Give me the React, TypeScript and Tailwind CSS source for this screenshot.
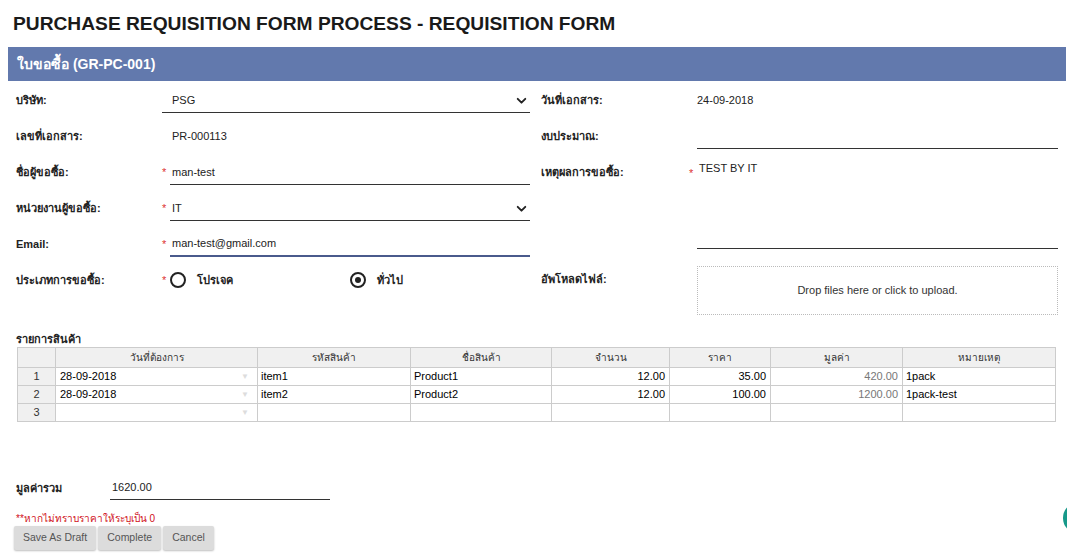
import React from "react";

const font = { fontFamily: '"Liberation Sans", Arial, "Noto Sans", sans-serif' };

function Chevron() {
  return (
    <svg width="13" height="13" viewBox="0 0 24 24" fill="none" stroke="#222" strokeWidth="3.5" strokeLinecap="round" strokeLinejoin="round">
      <path d="M5 9l7 7 7-7" />
    </svg>
  );
}

function Star() {
  return <span className="w-[8px] text-[#d33] text-[11px] leading-none">*</span>;
}

function Row({ label, children, lw = 146 }: { label: string; children?: React.ReactNode; lw?: number }) {
  return (
    <div className="h-[36px] flex items-center">
      <div style={{ width: lw }} className="shrink-0 text-[11px] font-bold text-[#222]">{label}</div>
      <div className="flex-1 h-full flex items-center">{children}</div>
    </div>
  );
}

function Field({ value, star, chevron, focus }: { value?: string; star?: boolean; chevron?: boolean; focus?: boolean }) {
  return (
    <div className="flex items-center w-full h-full">
      {star ? <Star /> : null}
      <div
        className={`flex-1 h-[25px] mt-[1px] flex items-center justify-between pr-[2px] border-b ${star ? "pl-[2px]" : "pl-[10px]"} ${focus ? "border-[#4a5a8c] border-b-2" : "border-[#333]"}`}
      >
        <span className="text-[11px] text-[#222]">{value}</span>
        {chevron ? <Chevron /> : null}
      </div>
    </div>
  );
}

function Radio({ checked, label }: { checked?: boolean; label: string }) {
  return (
    <div className="flex items-center gap-[11px]">
      <span className="w-[16px] h-[16px] rounded-full border-2 border-[#222] flex items-center justify-center">
        {checked ? <span className="w-[6px] h-[6px] rounded-full bg-[#222]" /> : null}
      </span>
      <span className="text-[11px] font-bold text-[#222]">{label}</span>
    </div>
  );
}

const cols = [
  { title: "", w: 38 },
  { title: "วันที่ต้องการ", w: 202 },
  { title: "รหัสสินค้า", w: 153 },
  { title: "ชื่อสินค้า", w: 141 },
  { title: "จำนวน", w: 118 },
  { title: "ราคา", w: 101 },
  { title: "มูลค่า", w: 132 },
  { title: "หมายเหตุ", w: 153 },
];

const rows = [
  ["1", "28-09-2018", "item1", "Product1", "12.00", "35.00", "420.00", "1pack"],
  ["2", "28-09-2018", "item2", "Product2", "12.00", "100.00", "1200.00", "1pack-test"],
  ["3", "", "", "", "", "", "", ""],
];

export default function App() {
  return (
    <div className="relative w-[1067px] h-[559px] overflow-hidden bg-white" style={font}>
      <h1 className="pl-[13px] pt-[10px] h-[47px] text-[19.2px] font-bold text-[#1a1a1a]">
        PURCHASE REQUISITION FORM PROCESS - REQUISITION FORM
      </h1>
      <div className="ml-[8px] w-[1058px]">
        <div className="h-[34px] bg-[#6279ad] flex items-center pl-[9px] text-white font-bold text-[14px]">
          ใบขอซื้อ (GR-PC-001)
        </div>
        <div className="flex pt-[1px]">
          <div className="w-[533px] pl-[8px] pr-[11px] flex flex-col">
            <Row label="บริษัท:"><Field value="PSG" chevron /></Row>
            <Row label="เลขที่เอกสาร:"><span className="pl-[10px] text-[11px] text-[#222]">PR-000113</span></Row>
            <Row label="ชื่อผู้ขอซื้อ:"><Field value="man-test" star /></Row>
            <Row label="หน่วยงานผู้ขอซื้อ:"><Field value="IT" star chevron /></Row>
            <Row label="Email:"><Field value="man-test@gmail.com" star focus /></Row>
            <Row label="ประเภทการขอซื้อ:">
              <Star />
              <div className="flex items-center">
                <div className="w-[180px]"><Radio label="โปรเจค" /></div>
                <Radio checked label="ทั่วไป" />
              </div>
            </Row>
          </div>
          <div className="flex-1 pr-[8px] flex flex-col">
            <Row lw={156} label="วันที่เอกสาร:"><span className="text-[11px] text-[#222]">24-09-2018</span></Row>
            <Row lw={156} label="งบประมาณ:"><Field /></Row>
            <div className="flex h-[96px]">
              <div className="w-[156px] h-[36px] flex items-center text-[11px] font-bold text-[#222]">เหตุผลการขอซื้อ:</div>
              <div className="flex-1 flex">
                <span className="w-[8px] text-[#d33] text-[11px] pt-[11px] -ml-[8px]">*</span>
                <div className="flex-1 border-b border-[#333] h-[95px] pt-[6px] pl-[2px] text-[11px] text-[#222]">TEST BY IT</div>
              </div>
            </div>
            <div className="flex mt-[16px]">
              <div className="w-[156px] pt-[5px] text-[11px] font-bold text-[#222]">อัพโหลดไฟล์:</div>
              <div className="flex-1 h-[49px] border border-dotted border-[#bbb] flex items-center justify-center text-[11px] text-[#333]">
                Drop files here or click to upload.
              </div>
            </div>
          </div>
        </div>
        <div className="pl-[8px] mt-[16px]">
          <div className="text-[11px] font-bold text-[#222] h-[16px]">รายการสินค้า</div>
          <table className="ml-[1px] border-collapse text-[11px] text-[#000]">
            <thead>
              <tr className="h-[20px]">
                {cols.map((c, i) => (
                  <th key={i} style={{ width: c.w }} className="bg-[#f0f0f0] border border-[#ccc] font-normal text-[10px] text-[#333] p-0">
                    {c.title}
                  </th>
                ))}
              </tr>
            </thead>
            <tbody>
              {rows.map((r, ri) => (
                <tr key={ri} className="h-[18px]">
                  {r.map((v, ci) => {
                    if (ci === 0)
                      return <td key={ci} className="bg-[#f0f0f0] border border-[#ccc] text-center text-[#333] p-0 leading-none">{v}</td>;
                    if (ci === 1)
                      return (
                        <td key={ci} className="border border-[#ccc] p-0 leading-none">
                          <div className="flex items-center justify-between">
                            <span className="pl-[4px]">{v}</span>
                            <span className="text-[8px] text-[#ddd] pr-[8px]">▼</span>
                          </div>
                        </td>
                      );
                    const right = ci >= 4 && ci <= 6;
                    return (
                      <td key={ci} className={`border border-[#ccc] px-[4px] leading-none ${right ? "text-right" : "text-left pl-[3px]"} ${ci === 6 ? "text-[#777]" : ""}`}>
                        {v}
                      </td>
                    );
                  })}
                </tr>
              ))}
            </tbody>
          </table>
        </div>
        <div className="pl-[8px] mt-[54px] flex items-center h-[24px]">
          <div className="w-[94px] text-[11px] font-bold text-[#222]">มูลค่ารวม</div>
          <div className="w-[220px] h-[24px] border-b border-[#333] flex items-center pl-[2px] text-[11px] text-[#222]">1620.00</div>
        </div>
        <div className="pl-[8px] mt-[14px] text-[10px] text-[#d01020] leading-none">**หากไม่ทราบราคาให้ระบุเป็น 0</div>
        <div className="pl-[6px] mt-[2px] flex gap-[2px]">
          {["Save As Draft", "Complete", "Cancel"].map((b) => (
            <button key={b} className="h-[24px] px-[9px] bg-[#dcdcdc] text-[#555] text-[10.5px] rounded-[2px] shadow-[0_1px_2px_rgba(0,0,0,0.25)]">
              {b}
            </button>
          ))}
        </div>
      </div>
      <div className="absolute left-[1063px] top-[502px] w-[32px] h-[32px] rounded-full bg-[#17998a]" />
    </div>
  );
}
